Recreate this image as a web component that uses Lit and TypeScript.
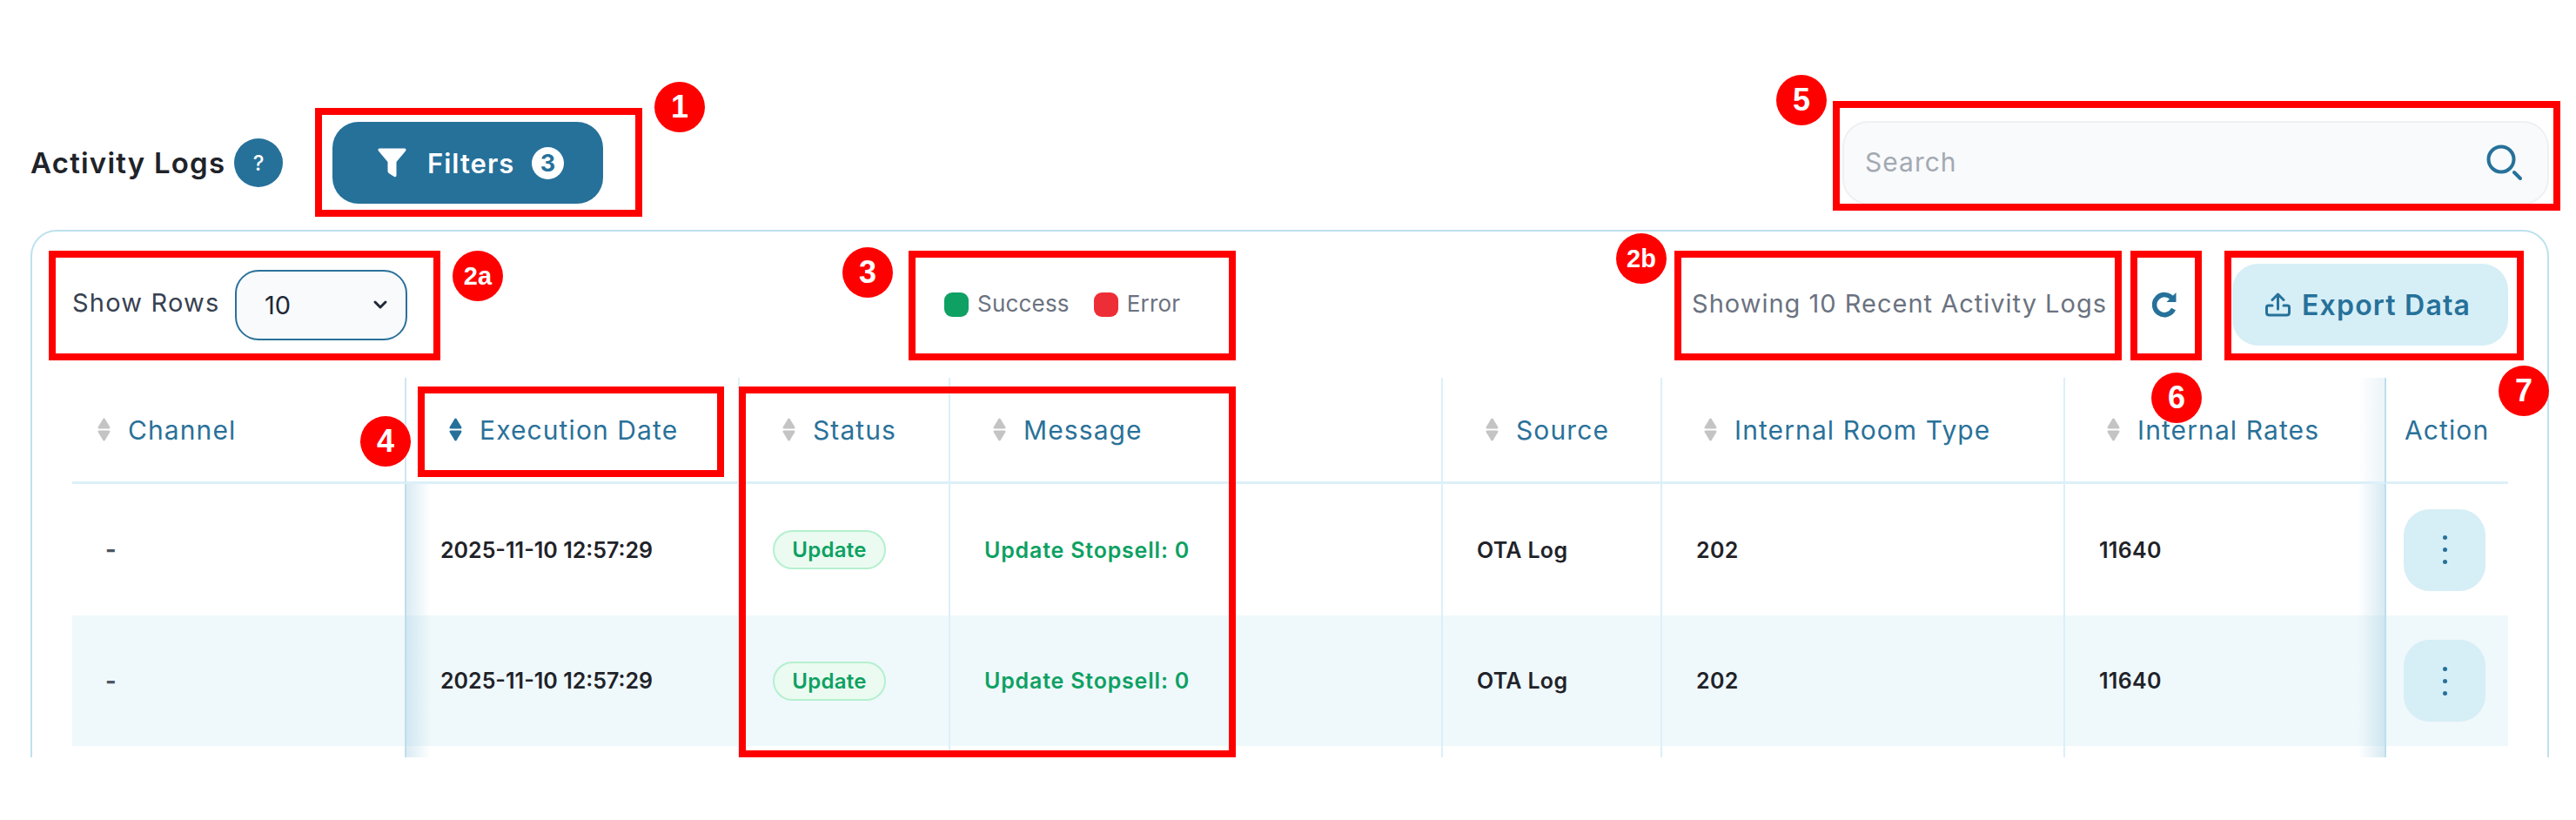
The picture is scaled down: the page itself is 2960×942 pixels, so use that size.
import { LitElement, html, css } from "lit";
import { customElement } from "lit/decorators.js";

const sortIcon = (active = false) => html`<svg class="sort ${active ? "active" : ""}" width="15" height="27" viewBox="0 0 15 27">
  <path d="M7.5 0.5 C8.5 0.5 9 1.5 10 3.5 L14 10 C15 11.5 14.5 12.5 13 12.5 H2 C0.5 12.5 0 11.5 1 10 L5 3.5 C6 1.5 6.5 0.5 7.5 0.5Z" />
  <path d="M7.5 26.5 C8.5 26.5 9 25.5 10 23.5 L14 17 C15 15.5 14.5 14.5 13 14.5 H2 C0.5 14.5 0 15.5 1 17 L5 23.5 C6 25.5 6.5 26.5 7.5 26.5Z" />
</svg>`;

const columns = [
  { label: "Channel", sort: true },
  { label: "Execution Date", sort: true, active: true },
  { label: "Status", sort: true },
  { label: "Message", sort: true },
  { label: "Source", sort: true },
  { label: "Internal Room Type", sort: true },
  { label: "Internal Rates", sort: true },
  { label: "Action", sort: false },
];

const annotations = [
  { x: 362, y: 124, w: 376, h: 125 },
  { x: 56, y: 288, w: 450, h: 126 },
  { x: 1044, y: 288, w: 376, h: 126 },
  { x: 1924, y: 288, w: 514, h: 126 },
  { x: 2448, y: 288, w: 82, h: 126 },
  { x: 2556, y: 288, w: 344, h: 126 },
  { x: 2106, y: 116, w: 836, h: 126 },
  { x: 480, y: 444, w: 352, h: 104 },
  { x: 849, y: 444, w: 571, h: 426 },
];

const marks = [
  { t: "1", x: 752, y: 94 },
  { t: "2a", x: 520, y: 288 },
  { t: "2b", x: 1857, y: 268 },
  { t: "3", x: 968, y: 284 },
  { t: "4", x: 414, y: 478 },
  { t: "5", x: 2041, y: 86 },
  { t: "6", x: 2472, y: 428 },
  { t: "7", x: 2871, y: 420 },
];

@customElement("app-root")
export class AppRoot extends LitElement {
  static styles = css`
    :host {
      display: block;
      position: relative;
      width: 2960px;
      height: 942px;
      background: #fff;
      overflow: hidden;
      font-family: Inter, "Noto Sans", sans-serif;
    }
    * { box-sizing: border-box; }
    .clip { height: 870px; overflow: hidden; padding: 139px 31px 0 35px; }
    .top { display: flex; align-items: center; height: 96px; }
    .title { font-size: 33px; font-weight: 600; color: #1f2329; letter-spacing: 1.2px; width: 234px; white-space: nowrap; }
    .help {
      width: 56px; height: 56px; border-radius: 50%; background: #26719a; color: #fff;
      display: flex; align-items: center; justify-content: center; font-size: 24px; font-weight: 500;
    }
    .filters {
      margin-left: 57px; width: 311px; height: 94px; border-radius: 30px; background: #26719a;
      border: none; color: #fff; display: flex; align-items: center; padding: 0 0 0 52px;
      font: 600 31px Inter, sans-serif; letter-spacing: 1px; text-align: left;
    }
    .filters .txt { margin-left: 24px; width: 120px; }
    .count {
      width: 37px; height: 37px; border-radius: 50%; background: #fff; color: #26719a;
      display: flex; align-items: center; justify-content: center; font-size: 27px; font-weight: 700; letter-spacing: 0;
    }
    .search {
      margin-left: auto; width: 812px; height: 96px; border: 2px solid #eef0f2; border-radius: 30px;
      background: #f9fafb; display: flex; align-items: center; justify-content: space-between;
      padding: 0 26px 0 24px; font-size: 30px; letter-spacing: 1px; color: #a3a9b3;
    }
    .search span { position: relative; top: -1px; }
    .card {
      margin-top: 29px; border: 2px solid #bde1ee; border-radius: 30px; height: 800px;
      padding: 37px 45px 0 46px; background: #fff;
    }
    .toolbar { display: flex; align-items: center; height: 94px; }
    .rows { font-size: 29px; letter-spacing: 1.2px; color: #374151; width: 187px; white-space: nowrap; line-height: 30px; padding-bottom: 4px; }
    .select {
      width: 198px; height: 81px; border: 2px solid #2a7199; border-radius: 27px; background: #f8fafc;
      display: flex; align-items: center; justify-content: space-between; padding: 0 20px 0 32px;
      font-size: 29px; color: #1f2937;
    }
    .legend { margin-left: 617px; display: flex; align-items: center; font-size: 26px; letter-spacing: 0.2px; color: #6b7280; height: 28px; }
    .legend span.t { position: relative; top: -2px; }
    .dot { width: 28px; height: 28px; border-radius: 9px; margin-right: 10px; }
    .dot.ok { background: #0ea163; }
    .dot.err { background: #ee2e36; margin-left: 28px; }
    .right { margin-left: auto; display: flex; align-items: center; }
    .showing { font-size: 29px; letter-spacing: 1px; color: #6b7280; white-space: nowrap; padding-bottom: 4px; }
    .refresh { margin: 0 64px 0 52px; display: block; }
    .export {
      width: 317px; height: 94px; border-radius: 30px; background: #d6eef6; border: none;
      display: flex; align-items: center; padding-left: 38px; gap: 13px;
      font: 600 32px Inter, sans-serif; letter-spacing: 1.2px; color: #26719a;
    }
    .table {
      margin-top: 37px;
      display: grid;
      grid-template-columns: 384px 383px 242px 566px 252px 463px 367px 142px;
      grid-template-rows: 122px 151px 150px 13px;
      width: 2799px;
    }
    .cell { display: flex; align-items: center; border-right: 2px solid #dcf0f8; position: relative; min-width: 0; }
    .cell.c0 { border-right: 2px solid #cfe6f0; }
    .cell.c6 { border-right: none; }
    .cell.c7 { border-right: none; border-left: 2px solid #bddfec; }
    .head {
      border-bottom: 3px solid #dcf0f8; gap: 20px;
      font-size: 30px; letter-spacing: 1.1px; color: #2a7199; white-space: nowrap;
    }
    .head.c0 { padding-left: 29px; }
    .head.c1 { padding-left: 49px; }
    .head.c2 { padding-left: 49px; }
    .head.c3 { padding-left: 49px; }
    .head.c4 { padding-left: 49px; }
    .head.c5 { padding-left: 48px; }
    .head.c6 { padding-left: 48px; }
    .head.c7 { padding-left: 21px; }
    .sort { fill: #c4c4c4; flex: none; }
    .sort.active { fill: #26719a; }
    .body { padding-left: 39px; font-size: 25px; font-weight: 600; letter-spacing: 0.3px; color: #1f2329; white-space: nowrap; }
    .body.c0 { padding-left: 38px; color: #4b5563; font-weight: 700; font-size: 27px; }
    .body.c1 { letter-spacing: 0; }
    .body.c7 { padding-left: 20px; }
    .stripe { background: #eff8fb; }
    .sticky-l { z-index: 1; }
    .sticky-l::after, .sticky-r::after {
      content: ""; position: absolute; top: 0; bottom: 0; width: 30px; pointer-events: none;
    }
    .sticky-l::after { left: 100%; background: linear-gradient(to right, rgba(175, 213, 229, 0.5), rgba(175, 213, 229, 0)); }
    .sticky-r::after { right: 0; background: linear-gradient(to left, rgba(175, 213, 229, 0.5), rgba(175, 213, 229, 0)); }
    .head.sticky-r::after { opacity: 0.5; }
    .pill {
      width: 130px; height: 45px; border-radius: 23px; background: #ebfbf1; border: 2px solid #b5f0cf;
      color: #0ea163; display: flex; align-items: center; justify-content: center; font-size: 24px;
      margin-left: -1px;
    }
    .green { color: #0ea163; letter-spacing: 0.8px; }
    .more {
      width: 94px; height: 94px; border-radius: 30px; background: #d6eef6;
      display: flex; flex-direction: column; align-items: center; justify-content: center; gap: 9px;
    }
    .more i { width: 5px; height: 5px; border-radius: 50%; background: #26719a; display: block; }
    .box { position: absolute; z-index: 2; border: 8px solid #ff0000; pointer-events: none; }
    .mark {
      position: absolute; z-index: 3; width: 58px; height: 58px; border-radius: 50%; background: #ff0000; color: #fff;
      display: flex; align-items: center; justify-content: center;
      font: 700 36px "Liberation Sans", Arial, sans-serif;
    }
    .mark.small { font-size: 29px; }
  `;

  private row(stripe: boolean) {
    const s = stripe ? "stripe" : "";
    return html`
      <div class="cell body c0 sticky-l ${s}">-</div>
      <div class="cell body c1 ${s}">2025-11-10 12:57:29</div>
      <div class="cell body c2 ${s}"><span class="pill">Update</span></div>
      <div class="cell body c3 green ${s}">Update Stopsell: 0</div>
      <div class="cell body c4 ${s}">OTA Log</div>
      <div class="cell body c5 ${s}">202</div>
      <div class="cell body c6 sticky-r ${s}">11640</div>
      <div class="cell body c7 ${s}"><div class="more"><i></i><i></i><i></i></div></div>
    `;
  }

  private emptyRow() {
    return columns.map(
      (_, i) => html`<div class="cell c${i} ${i === 0 ? "sticky-l" : i === 6 ? "sticky-r" : ""}"></div>`
    );
  }

  render() {
    return html`
      <div class="clip">
        <div class="top">
          <div class="title">Activity Logs</div>
          <div class="help">?</div>
          <button class="filters">
            <svg width="33" height="34" viewBox="0 0 33 34"><path fill="#fff" d="M2 0.5H31C32.5 0.5 33 2 32 3.5L21.5 16V31C21.5 33 20.5 33.5 19 33L13.5 29.5C12 28.5 11.5 27.5 11.5 26V16L1 3.5C0 2 0.5 0.5 2 0.5Z"/></svg>
            <span class="txt">Filters</span>
            <span class="count">3</span>
          </button>
          <div class="search">
            <span>Search</span>
            <svg width="44" height="44" viewBox="0 0 44 44" fill="none" stroke="#26719a" stroke-linecap="round"><circle cx="17" cy="18" r="14.5" stroke-width="4"/><path d="M32 33 L39 40" stroke-width="4"/></svg>
          </div>
        </div>
        <div class="card">
          <div class="toolbar">
            <div class="rows">Show Rows</div>
            <div class="select">
              <span>10</span>
              <svg width="18" height="12" viewBox="0 0 18 12" fill="none" stroke="#1f2937" stroke-width="3" stroke-linecap="round" stroke-linejoin="round"><path d="M3 3 L9 9 L15 3"/></svg>
            </div>
            <div class="legend">
              <span class="dot ok"></span><span class="t">Success</span>
              <span class="dot err"></span><span class="t">Error</span>
            </div>
            <div class="right">
              <span class="showing">Showing 10 Recent Activity Logs</span>
              <svg class="refresh" width="28" height="30" viewBox="0 0 28 30" fill="none"><path d="M23.5 8.5 A11.5 11.5 0 1 0 24.5 20" stroke="#26719a" stroke-width="5.5"/><path d="M27.5 1 V12 H16.5Z" fill="#26719a"/></svg>
              <button class="export">
                <svg width="29" height="28" viewBox="0 0 29 28" fill="none" stroke="#26719a" stroke-width="3" stroke-linecap="round" stroke-linejoin="round"><path d="M14.5 19 V2.5 M8 8.5 L14.5 2 L21 8.5"/><path d="M8 15 H3.5 Q1.5 15 1.5 17 V23 Q1.5 26 4.5 26 H24.5 Q27.5 26 27.5 23 V17 Q27.5 15 25.5 15 H21"/></svg>
                Export Data
              </button>
            </div>
          </div>
          <div class="table">
            ${columns.map((c, i) => html`<div class="cell head c${i} ${i === 6 ? "sticky-r" : ""}">${c.sort ? sortIcon(c.active) : ""}<span>${c.label}</span></div>`)}
            ${this.row(false)}
            ${this.row(true)}
            ${this.emptyRow()}
          </div>
        </div>
      </div>
      ${annotations.map((a) => html`<div class="box" style="left:${a.x}px;top:${a.y}px;width:${a.w}px;height:${a.h}px"></div>`)}
      ${marks.map((m) => html`<div class="mark ${m.t.length > 1 ? "small" : ""}" style="left:${m.x}px;top:${m.y}px">${m.t}</div>`)}
    `;
  }
}
